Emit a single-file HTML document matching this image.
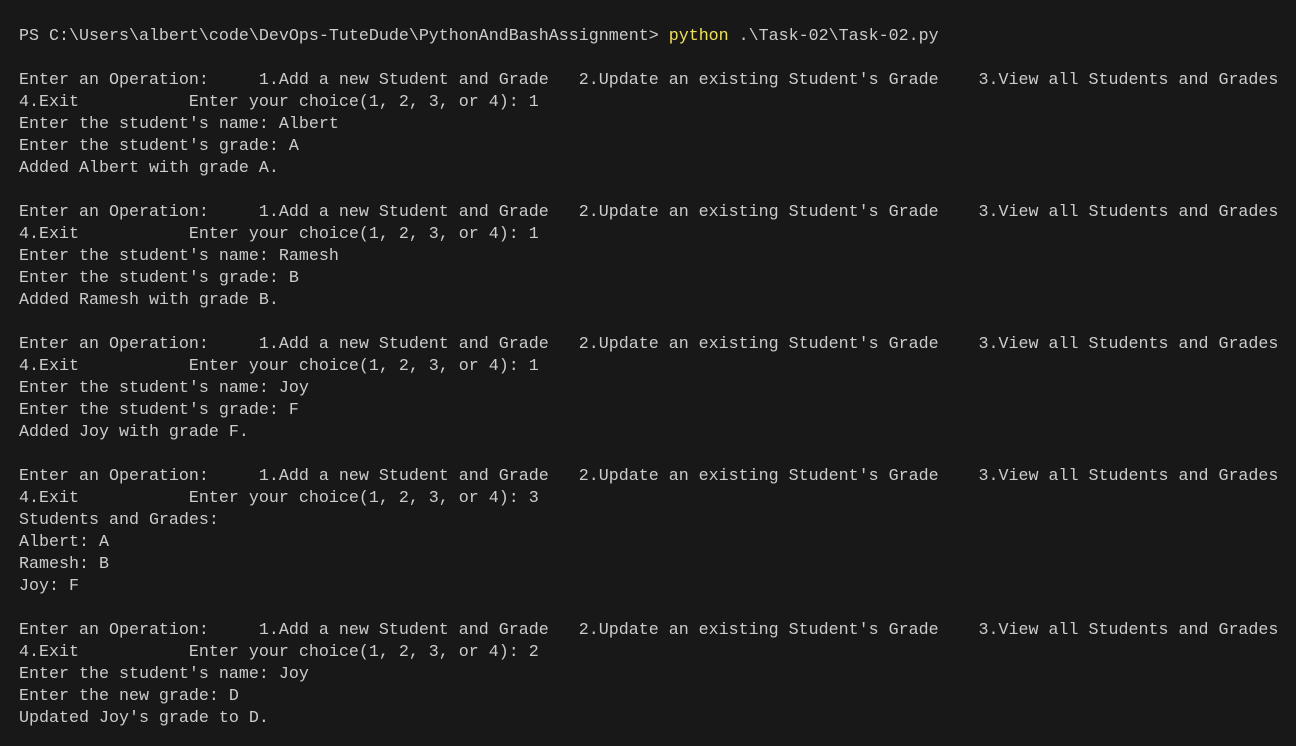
<!DOCTYPE html>
<html><head><meta charset="utf-8"><style>
html,body{margin:0;padding:0;background:#181818;width:1296px;height:746px;overflow:hidden}
pre{margin:0;padding:26px 0 0 19px;font-family:"Liberation Mono",monospace;font-size:16.67px;line-height:22px;color:#cccccc;white-space:pre}
.y{color:#f1e05a}
</style></head><body><pre>PS C:\Users\albert\code\DevOps-TuteDude\PythonAndBashAssignment&gt; <span class="y">python</span> .\Task-02\Task-02.py

Enter an Operation:     1.Add a new Student and Grade   2.Update an existing Student's Grade    3.View all Students and Grades
4.Exit           Enter your choice(1, 2, 3, or 4): 1
Enter the student's name: Albert
Enter the student's grade: A
Added Albert with grade A.

Enter an Operation:     1.Add a new Student and Grade   2.Update an existing Student's Grade    3.View all Students and Grades
4.Exit           Enter your choice(1, 2, 3, or 4): 1
Enter the student's name: Ramesh
Enter the student's grade: B
Added Ramesh with grade B.

Enter an Operation:     1.Add a new Student and Grade   2.Update an existing Student's Grade    3.View all Students and Grades
4.Exit           Enter your choice(1, 2, 3, or 4): 1
Enter the student's name: Joy
Enter the student's grade: F
Added Joy with grade F.

Enter an Operation:     1.Add a new Student and Grade   2.Update an existing Student's Grade    3.View all Students and Grades
4.Exit           Enter your choice(1, 2, 3, or 4): 3
Students and Grades:
Albert: A
Ramesh: B
Joy: F

Enter an Operation:     1.Add a new Student and Grade   2.Update an existing Student's Grade    3.View all Students and Grades
4.Exit           Enter your choice(1, 2, 3, or 4): 2
Enter the student's name: Joy
Enter the new grade: D
Updated Joy's grade to D.</pre></body></html>
